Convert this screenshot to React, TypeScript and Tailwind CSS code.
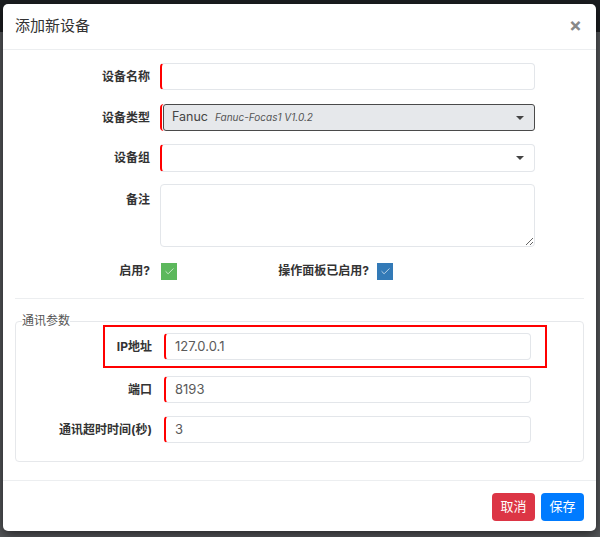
import { Check } from "lucide-react";

const FONT = "font-['Inter','Noto_Sans_CJK_SC',sans-serif]";

function Caret() {
  return (
    <svg width="8" height="4" viewBox="0 0 8 4" className="shrink-0">
      <path d="M0 0h8L4 4z" fill="#444" />
    </svg>
  );
}

function Box({ color }: { color: string }) {
  return (
    <span className={`flex h-[17px] w-[16px] items-center justify-center ${color}`}>
      <Check size={11} strokeWidth={1.4} className="text-white" />
    </span>
  );
}

export default function App() {
  const inputCls =
    "h-[27px] rounded-[4px] border border-[#e3e6ea] border-l-2 border-l-[#f00] px-[9px] text-[13px] text-[#5a5a5a] flex items-center";

  return (
    <div
      className={`h-[537px] w-[600px] overflow-hidden bg-[linear-gradient(#1c1e21_0_32px,#55575a_32px)] pl-[3px] pt-[4px] ${FONT}`}
    >
      <div className="h-[527px] w-[593px] rounded-[5px] bg-white shadow-[0_3px_12px_rgba(0,0,0,0.6)]">
        {/* header */}
        <div className="flex h-[46px] items-center justify-between border-b border-[#eceef0] pl-[12px] pr-[14px]">
          <h1 className="text-[15px] text-[#333]">添加新设备</h1>
          <span className="-mt-[3px] text-[19px] font-bold leading-none text-[#888]">×</span>
        </div>

        {/* body */}
        <div className="px-[12px] pt-[13px]">
          <div className="flex items-center text-[12px] font-bold text-[#333]">
            <span className="w-[135px] text-right">设备名称</span>
            <div className={`ml-[10px] w-[375px] ${inputCls}`}></div>
          </div>

          <div className="mt-[14px] flex items-center text-[12px] font-bold text-[#333]">
            <span className="w-[135px] text-right">设备类型</span>
            <div className="ml-[10px] flex h-[27px] w-[375px] rounded-[4px] border-l-2 border-l-[#f00] pl-px">
              <div className="flex flex-1 items-center rounded-[3px] border-[1.5px] border-[#4a4a4a] bg-[#e6e8eb] pl-[8px] pr-[10px] font-normal">
                <span className="text-[12.5px] text-[#444]">Fanuc</span>
                <span className="ml-[7px] text-[10px] italic text-[#555]">Fanuc-Focas1 V1.0.2</span>
                <span className="ml-auto">
                  <Caret />
                </span>
              </div>
            </div>
          </div>

          <div className="mt-[13px] flex items-center text-[12px] font-bold text-[#333]">
            <span className="w-[135px] text-right">设备组</span>
            <div className={`ml-[10px] h-[28px] w-[375px] justify-end pr-[10px] ${inputCls}`}>
              <Caret />
            </div>
          </div>

          <div className="mt-[12px] flex items-start text-[12px] font-bold text-[#333]">
            <span className="w-[135px] pt-[7px] text-right">备注</span>
            <textarea className="ml-[10px] h-[63px] w-[375px] rounded-[4px] border border-[#e3e6ea] outline-none"></textarea>
          </div>

          <div className="mt-[15px] flex items-center text-[12px] font-bold text-[#333]">
            <span className="w-[135px] text-right">启用?</span>
            <span className="ml-[11px]">
              <Box color="bg-[#5cb85c]" />
            </span>
            <span className="w-[192px] text-right">操作面板已启用?</span>
            <span className="ml-[8px]">
              <Box color="bg-[#337ab7]" />
            </span>
          </div>

          <div className="mt-[18px] border-t border-[#eceef0]"></div>

          <fieldset className="mt-[18px] rounded-[4px] border border-[#e6e8eb] pb-[18px]">
            <legend className="ml-[6px] text-[12px] leading-[8px] text-[#555]">通讯参数</legend>

            <div className="flex flex-col text-[12px] font-bold text-[#333]">
              <div className="ml-[87px] flex h-[43px] w-[444px] items-center border-2 border-[#f00]">
                <span className="w-[47px] text-right">IP地址</span>
                <div className={`ml-[12px] w-[367px] ${inputCls} font-normal`}>127.0.0.1</div>
              </div>

              <div className="mt-[8px] flex items-center">
                <span className="w-[136px] text-right">端口</span>
                <div className={`ml-[12px] w-[367px] ${inputCls} font-normal`}>8193</div>
              </div>

              <div className="mt-[13px] flex items-center">
                <span className="w-[136px] text-right">通讯超时时间(秒)</span>
                <div className={`ml-[12px] w-[367px] ${inputCls} font-normal`}>3</div>
              </div>
            </div>
          </fieldset>
        </div>

        {/* footer */}
        <div className="mt-[18px] flex justify-end gap-[6px] border-t border-[#eceef0] pr-[12px] pt-[12px]">
          <button className="h-[28px] w-[43px] rounded-[4px] bg-[#dc3545] text-[13px] text-white">取消</button>
          <button className="h-[28px] w-[43px] rounded-[4px] bg-[#007bff] text-[13px] text-white">保存</button>
        </div>
      </div>
    </div>
  );
}
